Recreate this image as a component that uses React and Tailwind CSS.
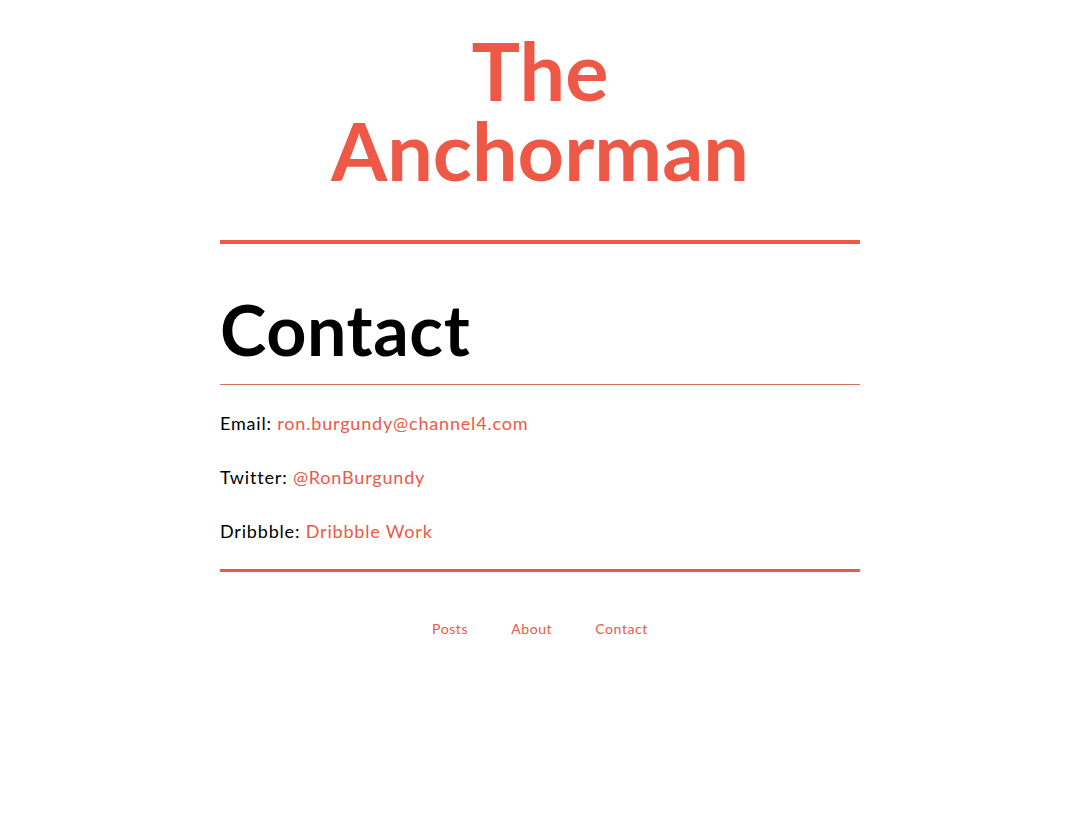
export default function App() {
  return (
    <div className="min-h-[840px] bg-white" style={{ fontFamily: "Lato, 'Open Sans', sans-serif" }}>
      <div className="mx-auto w-[640px] pt-[30px]">
        <h1 className="text-center text-[81px] leading-[80px] font-bold text-[#ee5846]">
          The
          <br />
          Anchorman
        </h1>
        <div className="mt-[50px] h-[4px] bg-[#ee5846]" />
        <h2 className="mt-[50px] text-[70px] leading-[70px] font-bold tracking-[0.6px] text-black">Contact</h2>
        <div className="mt-[20px] h-px bg-[#d4735f]" />
        <div className="mt-[25px] flex flex-col gap-[27px] text-[18px] leading-[27px] tracking-[0.82px] text-black">
          <p>
            Email: <a className="text-[#ee5846]">ron.burgundy@channel4.com</a>
          </p>
          <p>
            Twitter: <a className="text-[#ee5846]">@RonBurgundy</a>
          </p>
          <p>
            Dribbble: <a className="text-[#ee5846]">Dribbble Work</a>
          </p>
        </div>
        <div className="mt-[24px] h-[3px] bg-[#ee5846]" />
        <nav className="mt-[47px] flex justify-center gap-[43px] text-[14px] leading-[20px] tracking-[0.6px] text-[#ee5846]">
          <a>Posts</a>
          <a>About</a>
          <a>Contact</a>
        </nav>
      </div>
    </div>
  );
}
